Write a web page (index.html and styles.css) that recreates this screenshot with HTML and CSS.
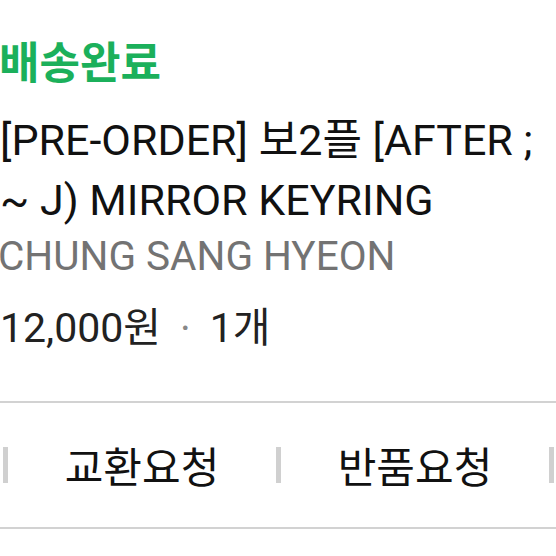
FILE: index.html
```html
<!DOCTYPE html>
<html lang="ko">
<head>
<meta charset="utf-8">
<link rel="stylesheet" href="styles.css">
</head>
<body>
<div class="page">
  <div class="status">배송완료</div>
  <div class="info">
    <div class="title">[PRE-ORDER] 보2플 [AFTER ; ~ J) MIRROR KEYRING</div>
    <div class="artist">CHUNG SANG HYEON</div>
    <div class="price"><span>12,000원</span><span class="dot">·</span><span>1개</span></div>
  </div>
  <div class="actions">
    <span class="sep"></span>
    <button class="btn">교환요청</button>
    <span class="sep"></span>
    <button class="btn">반품요청</button>
    <span class="sep"></span>
  </div>
</div>
</body>
</html>
```
FILE: styles.css
```css
html, body {
  margin: 0;
  padding: 0;
  background: #ffffff;
}
.page {
  width: 556px;
  overflow: hidden;
  font-family: Roboto, "Noto Sans CJK KR", sans-serif;
}
.status {
  margin-left: -1px;
  padding-top: 36px;
  font-size: 44px;
  line-height: 56px;
  font-weight: 700;
  color: #1bb05b;
}
.info {
  padding-top: 18px;
}
.title {
  width: 556px;
  font-size: 43px;
  line-height: 60px;
  color: #111111;
}
.artist {
  margin-left: -2px;
  font-size: 40.5px;
  line-height: 52px;
  color: #737373;
}
.price {
  margin-top: 20px;
  display: flex;
  align-items: center;
  font-size: 41px;
  line-height: 52px;
  color: #222222;
}
.dot {
  color: #888888;
  margin: 0 19px;
}
.actions {
  margin-top: 47px;
  height: 124px;
  border-top: 2px solid #d2d2d2;
  border-bottom: 2px solid #d2d2d2;
  display: flex;
  align-items: center;
  padding-left: 3px;
}
.sep {
  width: 5px;
  height: 36px;
  background: #d0d0d0;
  flex: none;
}
.btn {
  width: 268px;
  flex: none;
  border: 0;
  padding: 0;
  background: transparent;
  font-family: "Noto Sans CJK KR", sans-serif;
  font-size: 42px;
  color: #111111;
  line-height: 56px;
}
```
